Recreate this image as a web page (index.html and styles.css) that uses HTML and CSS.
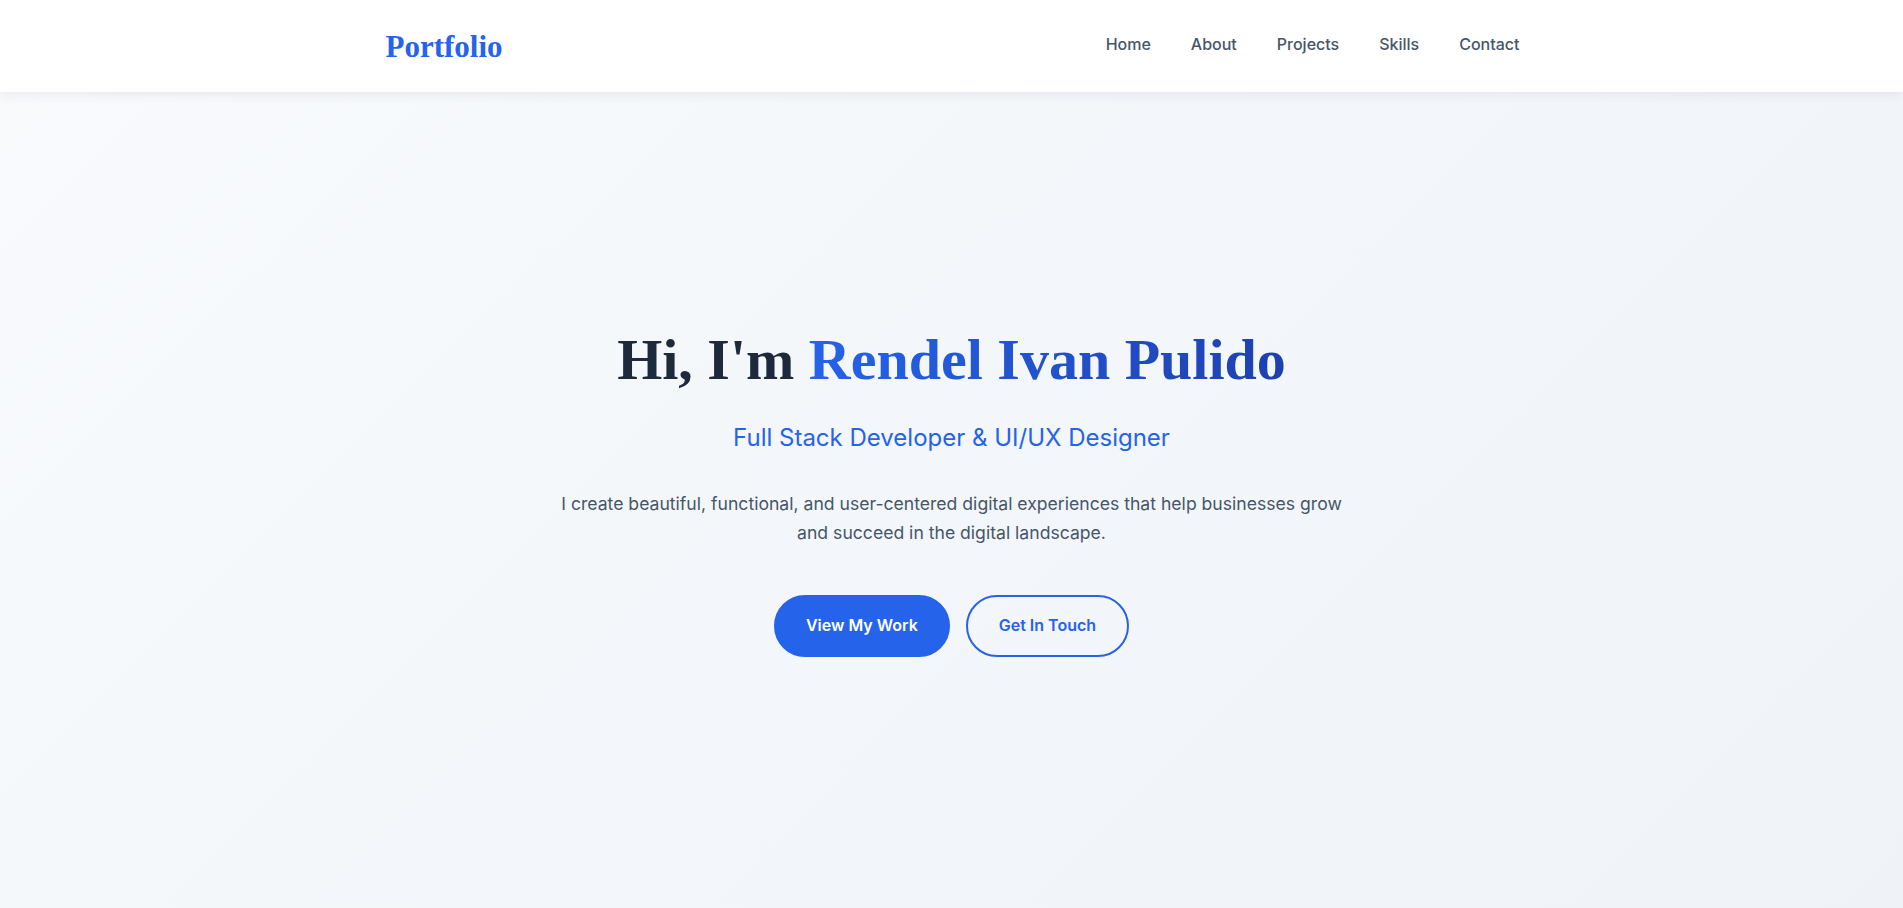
FILE: index.html
```html
<!DOCTYPE html>
<html lang="en">
<head>
<meta charset="utf-8">
<title>Portfolio</title>
<link rel="stylesheet" href="styles.css">
</head>
<body>
<header class="site-header">
  <div class="container nav-row">
    <a class="logo" href="#">Portfolio</a>
    <nav class="nav">
      <a href="#">Home</a>
      <a href="#">About</a>
      <a href="#">Projects</a>
      <a href="#">Skills</a>
      <a href="#">Contact</a>
    </nav>
  </div>
</header>
<main class="hero">
  <div class="hero-content">
    <h1 class="hero-title">Hi, I'm <span class="name">Rendel Ivan Pulido</span></h1>
    <p class="hero-subtitle">Full Stack Developer &amp; UI/UX Designer</p>
    <p class="hero-text">I create beautiful, functional, and user-centered digital experiences that help businesses grow and succeed in the digital landscape.</p>
    <div class="hero-buttons">
      <a class="btn btn-primary" href="#">View My Work</a>
      <a class="btn btn-outline" href="#">Get In Touch</a>
    </div>
  </div>
</main>
</body>
</html>
```
FILE: styles.css
```css
* { box-sizing: border-box; margin: 0; padding: 0; }
html, body { height: 100%; }
body {
  font-family: Inter, "Noto Sans", sans-serif;
  line-height: 1.6;
  color: #1e293b;
  background: linear-gradient(135deg, #f8fafc 0%, #eff3f8 100%);
  min-height: 100vh;
  overflow: hidden;
}
a { text-decoration: none; }
.site-header {
  background: #ffffff;
  box-shadow: 0 2px 12px rgba(15, 23, 42, 0.08);
  height: 92px;
  display: flex;
  align-items: center;
  position: relative;
  z-index: 2;
}
.container {
  width: 100%;
  max-width: 1200px;
  margin: 0 auto;
  padding: 0 2rem;
}
.nav-row {
  display: flex;
  justify-content: space-between;
  align-items: center;
}
.logo {
  font-family: "Liberation Serif", serif;
  font-weight: 700;
  font-size: 31px;
  color: #2563eb;
  line-height: 1;
  margin-left: 2px;
}
.nav {
  display: flex;
  gap: 40px;
}
.nav a {
  color: #475569;
  font-size: 16px;
  font-weight: 500;
  margin-top: -2px;
}
.hero {
  height: calc(100vh - 92px);
  display: flex;
  align-items: center;
  justify-content: center;
  text-align: center;
  padding: 0 2rem;
}
.hero-content {
  max-width: 800px;
  margin-top: -18px;
}
.hero-title {
  font-family: "Liberation Serif", serif;
  font-weight: 700;
  font-size: 58px;
  line-height: 1.2;
  color: #1e293b;
  margin-bottom: 24px;
}
.name {
  background: linear-gradient(90deg, #2563eb 0%, #1e40af 100%);
  -webkit-background-clip: text;
  background-clip: text;
  color: transparent;
}
.hero-subtitle {
  font-size: 24px;
  color: #2563eb;
  font-weight: 400;
  margin-bottom: 32px;
}
.hero-text {
  font-size: 17.6px;
  color: #475569;
  line-height: 1.65;
  margin-bottom: 48px;
}
.hero-buttons {
  display: flex;
  justify-content: center;
  gap: 16px;
}
.btn {
  display: inline-block;
  padding: 16px 32px;
  border: 2px solid #2563eb;
  border-radius: 50px;
  font-size: 16px;
  font-weight: 600;
  line-height: 1.6;
}
.btn-primary {
  background: #2563eb;
  color: #ffffff;
  padding: 16px 30px;
}
.btn-outline {
  background: transparent;
  color: #2563eb;
  padding: 16px 31px;
}
```
